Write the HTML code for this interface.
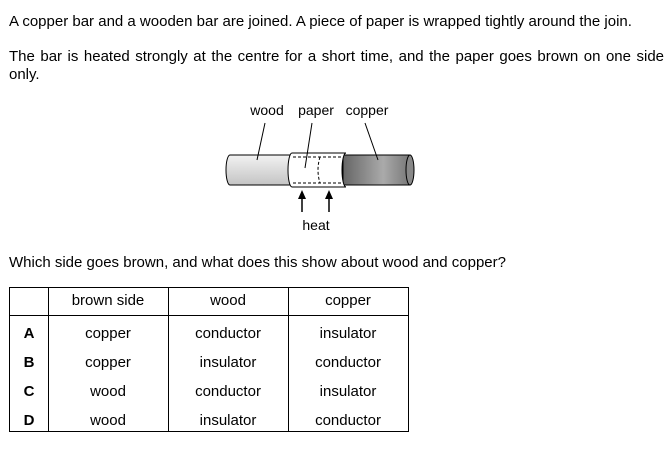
<!DOCTYPE html>
<html><head><style>
body{margin:0;width:671px;height:454px;background:#fff;font-family:"Liberation Sans",Arial,sans-serif;color:#000;position:relative;overflow:hidden}
.t{position:absolute;font-size:15px;white-space:nowrap}
.c{position:absolute;font-size:15px;text-align:center;width:120px;line-height:18px}
.b{font-weight:bold;width:38px}
</style></head><body>
<div class="t" style="left:9px;top:13px">A copper bar and a wooden bar are joined. A piece of paper is wrapped tightly around the join.</div>
<div class="t" style="left:9px;top:48px;width:655px;white-space:normal;line-height:18px;text-align:justify;text-align-last:left">The bar is heated strongly at the centre for a short time, and the paper goes brown on one side only.</div>
<svg style="position:absolute;left:0;top:0" width="671" height="454">
<defs>
<linearGradient id="w" x1="0" y1="0" x2="0" y2="1"><stop offset="0" stop-color="#f2f2f2"/><stop offset="1" stop-color="#c4c4c4"/></linearGradient>
<linearGradient id="c" x1="0" y1="0" x2="1" y2="0"><stop offset="0" stop-color="#666"/><stop offset="0.6" stop-color="#aaa"/><stop offset="1" stop-color="#777"/></linearGradient>
</defs>
<path d="M230 155 H292 V185 H230 A4 15 0 0 1 230 155Z" fill="url(#w)" stroke="#000" stroke-width="1"/>
<path d="M343 155 H410 V185 H343Z" fill="url(#c)" stroke="#000"/>
<ellipse cx="410" cy="170" rx="4" ry="15" fill="#888" stroke="#000"/>
<path d="M292 153 H346 A4 17 0 0 0 346 187 H292 A4 17 0 0 1 292 153Z" fill="#fff" stroke="#000"/>
<path d="M293 157 H343 M293 183 H343 M320 157 Q316 170 320 183" fill="none" stroke="#000" stroke-dasharray="3,2"/>
<path d="M265 123 L257 160 M312 123 L305 168 M365 123 L378 160" stroke="#000"/>
<path d="M302 212 V196 M329 212 V196" stroke="#000" stroke-width="1.5"/>
<path d="M298 199 L302 190 L306 199Z M325 199 L329 190 L333 199Z" fill="#000"/>
<text x="267" y="115" font-size="14" text-anchor="middle" font-family="Liberation Sans">wood</text>
<text x="316" y="115" font-size="14" text-anchor="middle" font-family="Liberation Sans">paper</text>
<text x="367" y="115" font-size="14" text-anchor="middle" font-family="Liberation Sans">copper</text>
<text x="316" y="230" font-size="14" text-anchor="middle" font-family="Liberation Sans">heat</text>
<g stroke="#000" stroke-width="1" fill="none">
<rect x="9.5" y="287.5" width="399" height="144"/>
<path d="M9 315.5 H409 M48.5 287 V432 M168.5 287 V432 M288.5 287 V432"/>
</g>
</svg>
<div class="t" style="left:9px;top:254px">Which side goes brown, and what does this show about wood and copper?</div>
<div class="c" style="left:48px;top:292px">brown side</div>
<div class="c" style="left:168px;top:292px">wood</div>
<div class="c" style="left:288px;top:292px">copper</div>
<div class="c b" style="left:10px;top:325px">A</div>
<div class="c" style="left:48px;top:325px">copper</div>
<div class="c" style="left:168px;top:325px">conductor</div>
<div class="c" style="left:288px;top:325px">insulator</div>
<div class="c b" style="left:10px;top:354px">B</div>
<div class="c" style="left:48px;top:354px">copper</div>
<div class="c" style="left:168px;top:354px">insulator</div>
<div class="c" style="left:288px;top:354px">conductor</div>
<div class="c b" style="left:10px;top:383px">C</div>
<div class="c" style="left:48px;top:383px">wood</div>
<div class="c" style="left:168px;top:383px">conductor</div>
<div class="c" style="left:288px;top:383px">insulator</div>
<div class="c b" style="left:10px;top:412px">D</div>
<div class="c" style="left:48px;top:412px">wood</div>
<div class="c" style="left:168px;top:412px">insulator</div>
<div class="c" style="left:288px;top:412px">conductor</div>
</body></html>
